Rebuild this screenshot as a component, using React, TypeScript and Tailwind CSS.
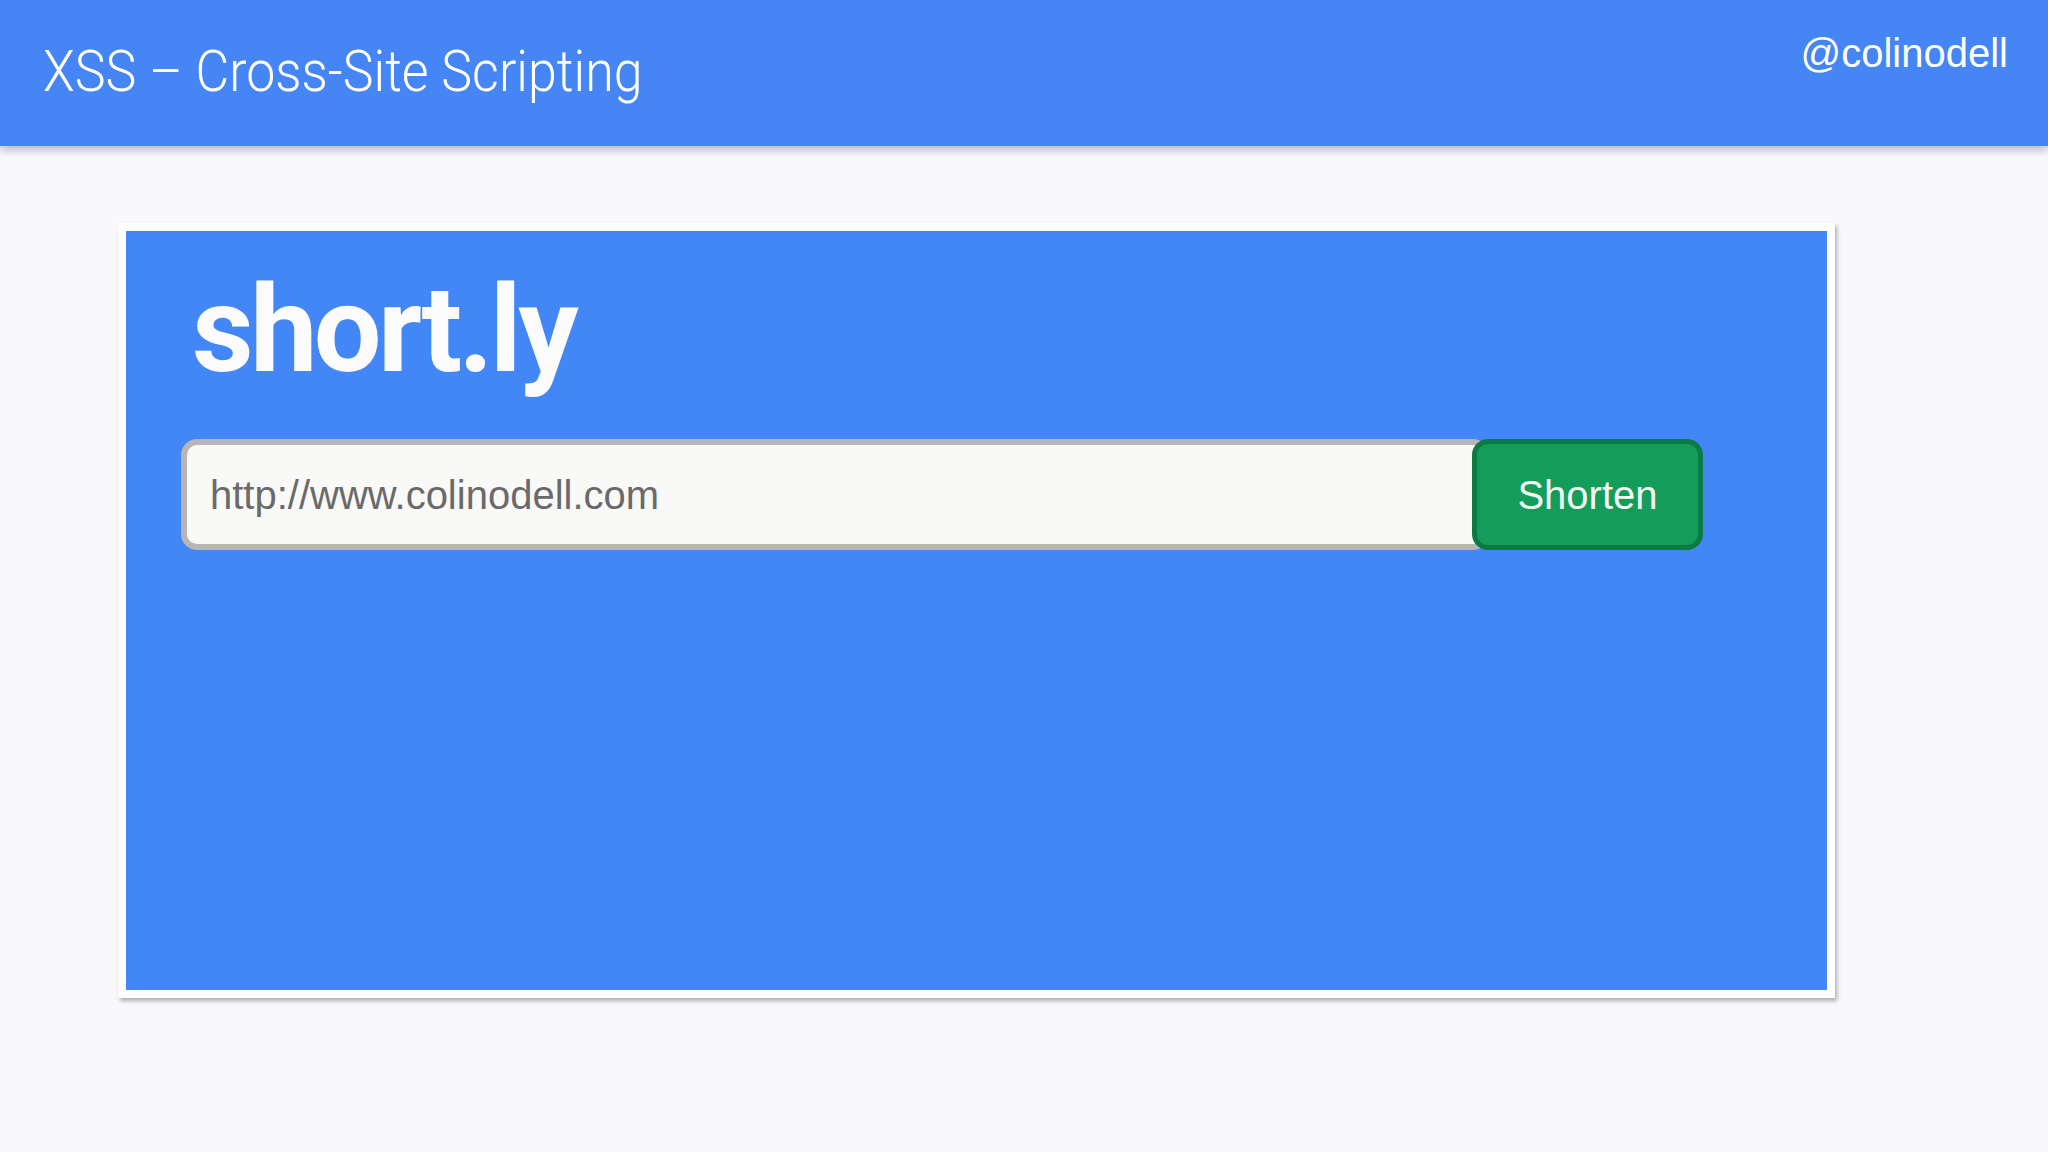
import React from "react";

export default function App() {
  return (
    <div className="w-[2048px] h-[1152px] bg-[#f9f8fb] overflow-hidden flex flex-col">
      <header className="h-[146px] shrink-0 bg-[#4586f4] flex justify-between items-start shadow-[0_3px_10px_rgba(0,0,0,0.3)] relative z-10">
        <h1
          className="ml-[43px] mt-[42px] text-white text-[58px] font-light leading-none origin-left scale-x-[0.895] whitespace-nowrap"
          style={{ fontFamily: "Roboto, 'Noto Sans', sans-serif" }}
        >
          XSS – Cross-Site Scripting
        </h1>
        <div
          className="pr-[40px] pt-[33px] text-white text-[40px] leading-none"
          style={{ fontFamily: "'Liberation Sans', Arial, sans-serif" }}
        >
          @colinodell
        </div>
      </header>
      <main className="pl-[118px] pt-[77px]">
        <div className="w-[1717px] h-[775px] bg-white p-[8px] shadow-[2px_3px_4px_rgba(0,0,0,0.3)]">
          <div className="w-full h-full bg-[#4386f5] pl-[66px] pt-[39px] pr-[123px]">
            <div
              className="text-[#fbfbfb] text-[120px] font-bold leading-none tracking-[-3.5px]"
              style={{ fontFamily: "Roboto, 'Noto Sans', sans-serif" }}
            >
              short.ly
            </div>
            <div className="flex mt-[49px] -ml-[11px]">
              <div className="w-[1308px] h-[111px] rounded-[16px] border-[6px] border-[#b6b6b6] bg-[#f9f9f7] flex items-center pl-[23px]">
                <span
                  className="text-[#6a6a6a] text-[40px] leading-none"
                  style={{ fontFamily: "'Liberation Sans', Arial, sans-serif" }}
                >
                  http://www.colinodell.com
                </span>
              </div>
              <div
                className="relative z-10 -ml-[17px] w-[231px] h-[111px] rounded-[16px] border-[5px] border-[#0b7a43] bg-[#139c5a] flex items-center justify-center text-[#f3fbf3] text-[40px] leading-none"
                style={{ fontFamily: "'Liberation Sans', Arial, sans-serif" }}
              >
                Shorten
              </div>
            </div>
          </div>
        </div>
      </main>
    </div>
  );
}
